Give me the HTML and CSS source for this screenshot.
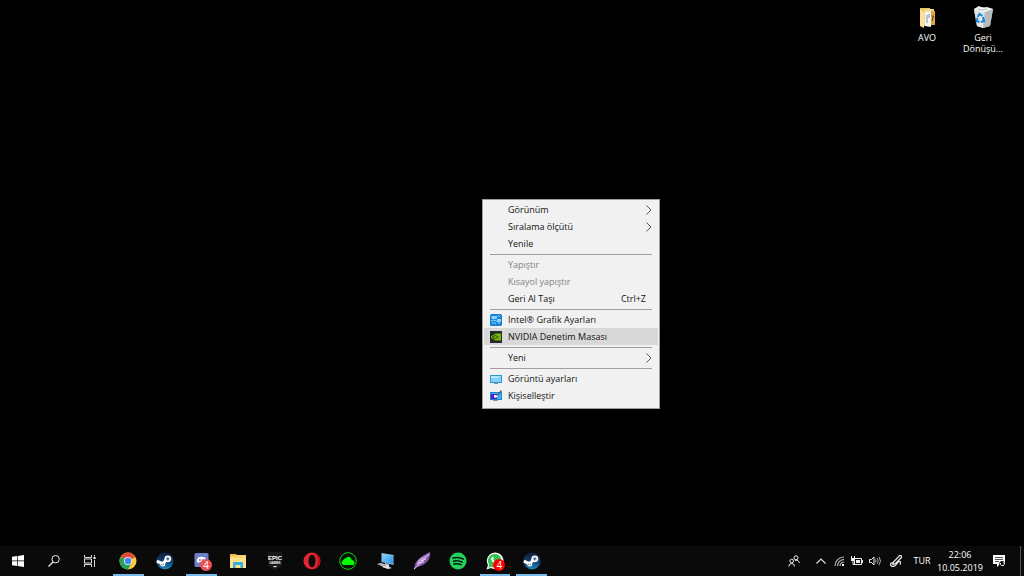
FILE: index.html
```html
<!DOCTYPE html>
<html lang="tr">
<head>
<meta charset="utf-8">
<title>Masaüstü</title>
<link rel="stylesheet" href="styles.css">
</head>
<body>
<svg width="0" height="0" class="defs" aria-hidden="true">
  <defs>
    <linearGradient id="steamFill" x1="0" y1="0" x2="0" y2="1"><stop offset="0" stop-color="#101c3c"/><stop offset=".55" stop-color="#12406f"/><stop offset="1" stop-color="#1c8cc4"/></linearGradient>
    <linearGradient id="screenFill" x1="0" y1="0" x2="1" y2="1"><stop offset="0" stop-color="#8fd3fb"/><stop offset="1" stop-color="#2196ea"/></linearGradient>
    <symbol id="steam" viewBox="0 0 18 18">
      <circle cx="9" cy="9" r="8.5" fill="url(#steamFill)"/>
      <path d="M.8 9.2 7 11.8 10.4 7.4" fill="none" stroke="#fff" stroke-width="3"/>
      <circle cx="11.8" cy="6.8" r="3.4" fill="#fff"/><circle cx="11.8" cy="6.8" r="1.8" fill="#5a7698" stroke="#dde6ee" stroke-width=".6"/>
      <circle cx="6.8" cy="12" r="2.5" fill="#fff"/><path d="M5 12.2q1.5 1.6 3-.3" stroke="#285684" fill="none" stroke-width=".7"/>
    </symbol>
    <symbol id="chevron" viewBox="0 0 8 10"><path d="M2.5 .5 7 5 2.5 9.5" fill="none" stroke="#555" stroke-width="1"/></symbol>
  </defs>
</svg>

<main class="desktop">
  <div class="shortcuts">
    <a class="shortcut" href="#avo">
      <svg class="shortcut-icon" viewBox="0 0 22 24">
        <path d="M4 2h10l1 2v16H4z" fill="#e8c061"/><path d="M8 3h10v15H8z" fill="#f5d88b"/>
        <path d="M14 5h5v14h-5z" fill="#dfa543"/><path d="M9 6l6-1v16l-6-1z" fill="#f4f5f7"/>
        <path d="M4 3l4 3v16l-4-2z" fill="#ffe09a"/>
        <path d="M11 9v8M13 8v4" stroke="#7690b5"/><path d="M15.500 10h2v2h-1v3" stroke="#664922" fill="none"/>
      </svg>
      <span>AVO</span>
    </a>
    <a class="shortcut" href="#geri-donusum">
      <svg class="shortcut-icon" viewBox="0 0 22 24">
        <path d="M2 3 10 1l11 2-3 17-7 2-6-2z" fill="#cdd2d5"/><path d="M2 3l11 2-2 17-6-2z" fill="#e3e6e9"/>
        <path d="M13 5l8-2-3 17-7 2z" fill="#b5babd"/><path d="M2 3 7 0l4 2 4-1 6 2-8 3z" fill="#f4f4f4"/><path d="M6 3l4 1 5-1" stroke="#b8bcc0" fill="none"/>
        <path d="M5.500 11l2-3 3 2M11 11l1 4-3 1M7.500 16l-3-1 1-3" fill="none" stroke="#1484d8" stroke-width="2"/>
      </svg>
      <span>Geri<br>Dönüşü...</span>
    </a>
  </div>

  <div class="menu" role="menu">
    <button class="item" role="menuitem"><span class="icon"></span><span class="label">Görünüm</span><svg class="arrow"><use href="#chevron"/></svg></button>
    <button class="item" role="menuitem"><span class="icon"></span><span class="label">Sıralama ölçütü</span><svg class="arrow"><use href="#chevron"/></svg></button>
    <button class="item" role="menuitem"><span class="icon"></span><span class="label">Yenile</span></button>
    <hr class="separator">
    <button class="item" role="menuitem" disabled><span class="icon"></span><span class="label">Yapıştır</span></button>
    <button class="item" role="menuitem" disabled><span class="icon"></span><span class="label">Kısayol yapıştır</span></button>
    <button class="item" role="menuitem"><span class="icon"></span><span class="label">Geri Al Taşı</span><span class="keys">Ctrl+Z</span></button>
    <hr class="separator">
    <button class="item" role="menuitem">
      <svg class="icon" viewBox="0 0 12 12"><rect width="12" height="12" rx="1.5" fill="#1682d3"/><path d="M1.500 2h6l-1 3h-5zM7 5h4v2H7z" fill="#8ed3fa"/><path d="M1 7q3-2 5 0t5 0M2 9q3-1 4 1M8 1l2 2M8 9h2" stroke="#9bdcff" fill="none"/></svg>
      <span class="label">Intel® Grafik Ayarları</span></button>
    <button class="item selected" role="menuitem">
      <svg class="icon" viewBox="0 0 12 12"><rect width="12" height="12" fill="#252a2b"/><path d="M5 2.500h6v7H5z" fill="#76b900"/><path d="M1 6q4-4.500 8.500 0-4.500 4.500-8.500 0z" fill="#3c5318" stroke="#76b900"/><path d="M3.500 6q2-2 3.500 0-1.500 2-3.500 0z" fill="#76b900"/></svg>
      <span class="label">NVIDIA Denetim Masası</span></button>
    <hr class="separator">
    <button class="item" role="menuitem"><span class="icon"></span><span class="label">Yeni</span><svg class="arrow"><use href="#chevron"/></svg></button>
    <hr class="separator">
    <button class="item" role="menuitem">
      <svg class="icon" viewBox="0 0 12 12"><rect y="2" width="12" height="8" fill="#2f98d0"/><rect x="1" y="3" width="10" height="6" fill="#80d2fb"/><path d="M1 3h10L7 5H1z" fill="#b6e8ff"/><path d="M4 10.500h4" stroke="#8295a0"/></svg>
      <span class="label">Görüntü ayarları</span></button>
    <button class="item" role="menuitem">
      <svg class="icon" viewBox="0 0 12 12"><rect y="2" width="12" height="8" fill="#1687d2"/><rect x="1" y="3" width="10" height="6" fill="#38b5f4"/><path d="M1 4h6v5H1z" fill="#5c14d5"/><path d="M4 5h3v2H4z" fill="#fff"/><path d="M11.500 .5 7 6" stroke="#53606b" stroke-width="1.500"/><path d="M7 5l1 1-2 2H4z" fill="#dce4e8"/><path d="M3 10.500h5" stroke="#8295a0"/></svg>
      <span class="label">Kişiselleştir</span></button>
  </div>
</main>

<footer class="taskbar">
  <nav class="system">
    <button class="task" aria-label="Başlat"><svg class="glyph" viewBox="0 0 12 12"><path d="M0 1.700 5.200 1v4.600H0zM5.900.9 12 0v5.600H5.900zM0 6.300h5.200V11L0 10.300zM5.900 6.300H12V12l-6.100-.9z" fill="#fff"/></svg></button>
    <button class="task" aria-label="Ara"><svg class="glyph" viewBox="0 0 12 12"><circle cx="7.600" cy="4.200" r="3.700" fill="none" stroke="#eee"/><path d="M5 7 .5 11.500" stroke="#eee" stroke-width="1.200"/></svg></button>
    <button class="task" aria-label="Görev görünümü"><svg class="glyph" viewBox="0 0 12 12"><path d="M.5 0v2.500h7V0M.5 12V9.500h7V12M.5 4v4M7.500 4v4M0 4h8M0 8h8M10.500 0v1.500M10.500 5v7" fill="none" stroke="#ddd"/><path d="M9.500 2h2v2h-2z" fill="#fff"/></svg></button>
  </nav>
  <nav class="apps">
    <button class="task open" aria-label="Chrome"><svg class="logo" viewBox="0 0 18 18"><circle cx="9" cy="9" r="8.500" fill="#fdcb3b"/><path d="M9 9 1.640 4.750A8.500 8.500 0 0 1 16.360 4.750L9 5z" fill="#de4b3c"/><path d="M1.640 4.750A8.500 8.500 0 0 0 9 17.500L12.500 11 9 9z" fill="#24a45b"/><path d="M9 5h7.500L9 9z" fill="#de4b3c"/><circle cx="9" cy="9" r="4" fill="#f3f3f3"/><circle cx="9" cy="9" r="3.200" fill="#4285f4"/></svg></button>
    <button class="task" aria-label="Steam"><svg class="logo"><use href="#steam"/></svg></button>
    <button class="task open" aria-label="Discord"><svg class="logo" viewBox="0 0 18 18"><path d="M3 1h11q1.500 0 1.500 1.500V17l-3-2H3q-1.500 0-1.500-1.500v-11Q1.500 1 3 1z" fill="#6c7fc8"/><path d="M5 5.500q3.500-1.500 7 0 1.500 2.500 1.200 4.500l-2 1-1-1H6.800l-1 1-2-1Q3.500 8 5 5.500z" fill="#fff"/><circle cx="7" cy="8" r="1" fill="#6c7fc8"/><circle cx="10" cy="8" r="1" fill="#6c7fc8"/></svg><span class="badge soft">4</span></button>
    <button class="task" aria-label="Dosya Gezgini"><svg class="logo" viewBox="0 0 18 18"><path d="M1 2h6l1 1h9v13H1z" fill="#e9b94b"/><path d="M1 5h16v11H1z" fill="#ffe18a"/><path d="M1 4h6l1-1h9v3H1z" fill="#f8d56f"/><path d="M4 16v-6h10v6h-2.500v-3h-5v3z" fill="#35aee2"/></svg></button>
    <button class="task" aria-label="Epic Games"><svg class="logo" viewBox="0 0 18 18"><path d="M2 0h14v14l-7 4-7-4z" fill="#18191a"/><text x="9" y="8" class="epic">EPIC</text><text x="9" y="12" class="games">GAMES</text><path d="M6.500 14h5L9 15.500z" fill="#ddd"/></svg></button>
    <button class="task" aria-label="Opera"><svg class="logo" viewBox="0 0 18 18"><ellipse cx="9" cy="9" rx="8.500" ry="8.500" fill="#e32431"/><path d="M11 1a8.300 8.300 0 0 1 0 16q4-3 4-8t-4-8z" fill="#b70d20"/><ellipse cx="9" cy="9" rx="3.500" ry="6.300" fill="#0a0a0a"/></svg></button>
    <button class="task" aria-label="Bulut"><svg class="logo" viewBox="0 0 18 18"><circle cx="9" cy="9" r="8.300" fill="#071007" stroke="#0bd80b" stroke-width="1"/><path d="M4.500 13a2.500 2.500 0 0 1-.3-4.800Q5 6 7 6.300 8 4 10.600 5 12.700 6 12.500 7.700q2.300 0 3 2.700.2 2.600-2 2.600z" fill="#0f0"/></svg></button>
    <button class="task" aria-label="Bilgisayar"><svg class="logo" viewBox="0 0 18 18"><path d="M5.500 1 17.500 3v10L5.500 10z" fill="#8fc8e8"/><path d="M6 2l11 2v8L6 9.500z" fill="url(#screenFill)"/><path d="M9 11l4 1v3H9z" fill="#a6b1b7"/><path d="M1 12l4-1 9 3-4 2zM6 15l4-1 6 2-4 1z" fill="#e2e5e6"/><path d="M3 12l7 2" stroke="#839097"/></svg></button>
    <button class="task" aria-label="Tüy"><svg class="logo" viewBox="0 0 18 18"><path d="M17 0q1 5-3 10-4 4-10 5l-3 3q0-8 6-12 5-4 10-6z" fill="#8455ae"/><path d="M17 0Q11 8 4 14q-1-5 4-8 5-2 9-6z" fill="#bba1d4"/><path d="M16 2Q11 9 1 17M8 9l5-2M6 11l5-1" fill="none" stroke="#e8ddef" stroke-width=".8"/></svg></button>
    <button class="task" aria-label="Spotify"><svg class="logo" viewBox="0 0 18 18"><circle cx="9" cy="9" r="8.500" fill="#20d45f"/><path d="M4 6q5.500-1.500 10.500 1.200M4.500 9.200q4.500-1.200 8.800 1M5 12q4-1 7.300.8" fill="none" stroke="#111" stroke-width="1.500" stroke-linecap="round"/></svg></button>
    <button class="task open" aria-label="WhatsApp"><svg class="logo" viewBox="0 0 18 18"><path d="M.5 17.500 2 13A8.300 8.300 0 1 1 5 16z" fill="#fff"/><path d="M2.300 15.700 3.300 12.800A6.800 6.800 0 1 1 5.500 14.700z" fill="#32c152"/><path d="M6 5q1-1 1.700.8l.2.900-.8.900q1 2 3 2.800l1-.9 2 1q0 2.300-2.600 1.900Q6.500 11.300 5.200 7.500 5 6 6 5z" fill="#fff"/></svg><span class="badge">4</span></button>
    <button class="task open" aria-label="Steam"><svg class="logo"><use href="#steam"/></svg></button>
  </nav>
  <div class="tray">
    <button class="tray-button people" aria-label="Kişiler"><svg class="glyph" viewBox="0 0 12 12"><circle cx="8" cy="2.800" r="2" fill="none" stroke="#eee"/><circle cx="3.700" cy="6" r="1.800" fill="none" stroke="#eee"/><path d="M.7 11.500Q1 8.500 3.700 8.500T6.500 11.500M7 5.500q3.500-1 4.500 2.500" fill="none" stroke="#eee"/></svg></button>
    <button class="tray-button" aria-label="Gizli simgeler"><svg class="glyph" viewBox="0 0 12 12"><path d="M1.500 8.500 6 4l4.500 4.500" fill="none" stroke="#ddd" stroke-width="1.200"/></svg></button>
    <button class="tray-button" aria-label="Ağ"><svg class="glyph" viewBox="0 0 12 12"><path d="M2 11A9 9 0 0 1 11 2M4.500 11A6.500 6.500 0 0 1 11 4.500M7 11a4 4 0 0 1 4-4" fill="none" stroke="#bbb" stroke-width="1.200"/><path d="M9 11V9h2v2z" fill="#fff"/></svg></button>
    <button class="tray-button" aria-label="Pil"><svg class="glyph" viewBox="0 0 12 12"><path d="M3.500 3.500h7v6h-7z" fill="none" stroke="#eee"/><path d="M5 5h4v3H5zM11 5h1v3h-1zM0 3h4v3H0z" fill="#eee"/><path d="M.5 1v2M3.500 1v2M2 6v3.500h2" stroke="#eee" fill="none"/></svg></button>
    <button class="tray-button" aria-label="Ses"><svg class="glyph" viewBox="0 0 12 12"><path d="M.5 4.500h2L5 2v8L2.500 7.500h-2z" fill="none" stroke="#eee"/><path d="M6.500 4.500q1 1.500 0 3M8.200 3.200q2 2.800 0 5.600M10 1.800q3 4.200 0 8.400" fill="none" stroke="#aaa"/></svg></button>
    <button class="tray-button pen" aria-label="Kalem"><svg class="glyph" viewBox="0 0 12 12"><path d="M11.300.8q-2-.8-3 1L3.500 7 3 9.500l2.500-1L11 3q1-1 .3-2.200zM3.500 8Q.5 7.500.5 9.500t2.500 2q2 0 4-3t3-2 0 3" fill="none" stroke="#eee" stroke-width="1.200"/></svg></button>
    <button class="tray-button language">TUR</button>
    <button class="tray-button clock"><span>22:06</span><span>10.05.2019</span></button>
    <button class="tray-button notices" aria-label="Bildirimler"><svg class="glyph" viewBox="0 0 12 12"><path d="M0 0h12v9H7l-3 3V9H0z" fill="#fff"/><path d="M2 2.500h8M2 4.500h8M2 6.500h4" stroke="#222" stroke-width=".8"/><circle cx="9" cy="8.700" r="2.700" fill="#111"/><path d="M7.500 8a2 2 0 1 0 3-1" stroke="#fff" fill="none"/></svg></button>
    <button class="show-desktop" aria-label="Masaüstünü göster"></button>
  </div>
</footer>
</body>
</html>
```

FILE: styles.css
```css
* { box-sizing: border-box; }
body {
  margin: 0;
  min-height: 100vh;
  display: flex;
  flex-direction: column;
  background: #000;
  color: #fff;
  font-family: "Open Sans", "Noto Sans", sans-serif;
  font-size: 9px;
  line-height: 12px;
}
button {
  border: 0;
  padding: 0;
  margin: 0;
  background: none;
  color: inherit;
  font: inherit;
}
svg { display: block; }
.defs { position: absolute; }

.desktop { position: relative; flex: 1; }
.shortcuts {
  display: flex;
  justify-content: flex-end;
  padding: 6px 13px 0 0;
}
.shortcut {
  width: 56px;
  display: flex;
  flex-direction: column;
  align-items: center;
  gap: 2px;
  color: #fff;
  line-height: 11px;
  text-align: center;
  text-decoration: none;
}
.shortcut-icon { width: 22px; height: 24px; }

.menu {
  position: absolute;
  left: 482px;
  top: 199px;
  width: 178px;
  padding: 1px 1px 4px;
  border: 1px solid #a0a0a0;
  background: #f1f1f1;
  color: #111;
}
.item {
  display: flex;
  align-items: center;
  width: 100%;
  height: 17px;
  padding: 0 6px;
  text-align: left;
}
.item:disabled { color: #838383; }
.item.selected { background: #d8d8d8; }
.icon { width: 12px; height: 12px; margin-right: 6px; }
.label { flex: 1; white-space: nowrap; }
.keys { padding-right: 6px; }
.arrow { width: 8px; height: 10px; }
.separator {
  height: 1px;
  margin: 2px 6px 1px;
  border: 0;
  background: #a0a0a0;
}

.taskbar {
  display: flex;
  height: 30px;
  background: #0a0a0a;
}
.system, .apps, .tray { display: flex; }
.system .task { width: 36px; }
.apps {
  width: 440px;
  margin-left: 2px;
}
.apps .task { flex: 1; }
.task {
  position: relative;
  display: flex;
  align-items: center;
  justify-content: center;
}
.open::after {
  content: "";
  position: absolute;
  left: 3px;
  right: 3px;
  bottom: 0;
  height: 2px;
  background: #76b9ed;
}
.glyph { width: 12px; height: 12px; }
.logo { width: 18px; height: 18px; }
.epic, .games {
  fill: #fff;
  font-family: "Liberation Sans Narrow", "Liberation Sans", sans-serif;
  font-weight: bold;
  text-anchor: middle;
}
.epic { font-size: 6px; }
.games { font-size: 3px; }
.badge {
  position: absolute;
  right: 8px;
  bottom: 5px;
  width: 12px;
  height: 12px;
  border-radius: 50%;
  background: #f00;
  color: #fff;
  font-size: 10px;
  text-align: center;
}
.badge.soft { background: #ee4f55; }

.tray { margin-left: auto; }
.tray-button {
  width: 18px;
  display: flex;
  align-items: center;
  justify-content: center;
}
.people { width: 36px; }
.pen { width: 24px; }
.language { width: 28px; }
.clock {
  width: 48px;
  flex-direction: column;
  line-height: 13px;
}
.notices { width: 30px; }
.show-desktop {
  width: 4px;
  margin-left: 6px;
  border-left: 1px solid #555;
}
```
